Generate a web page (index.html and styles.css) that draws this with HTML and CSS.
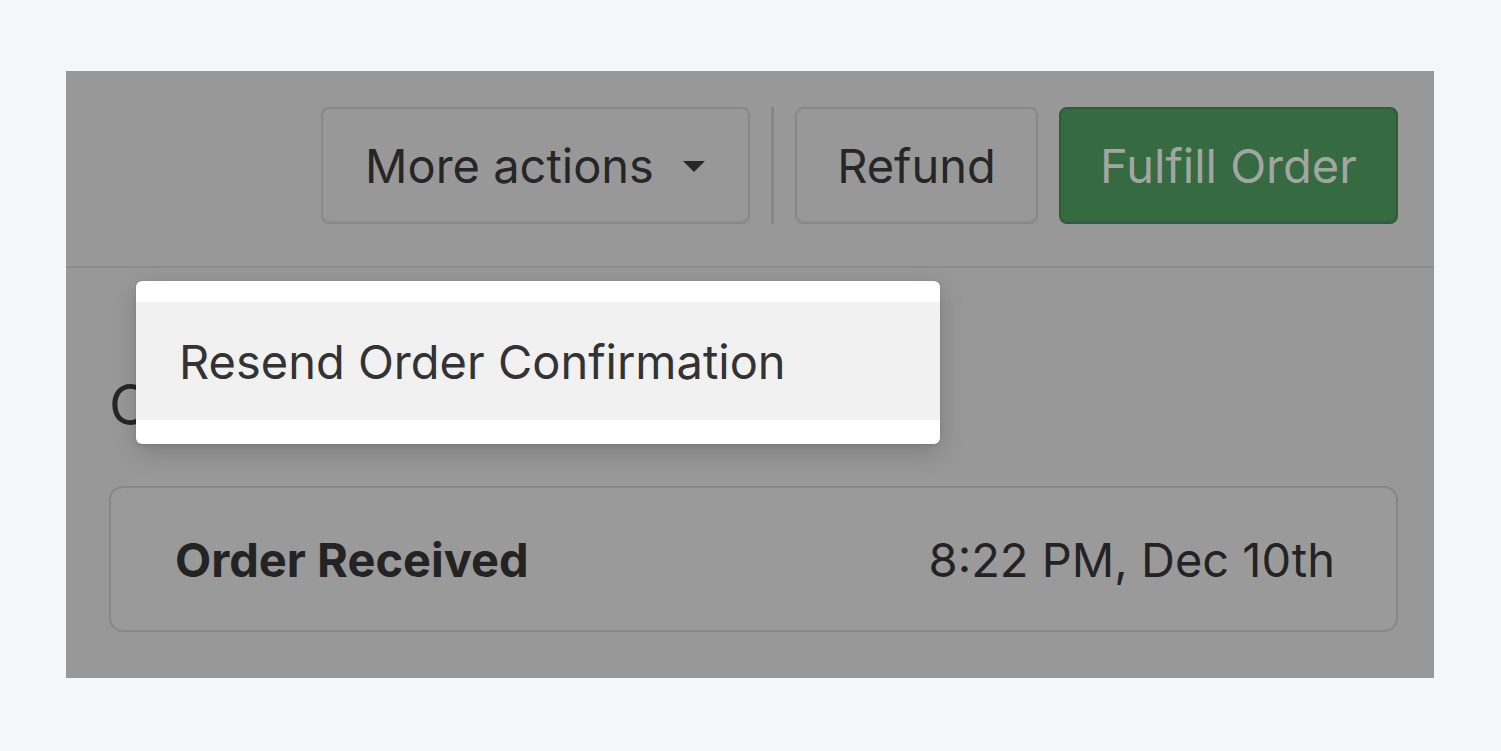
FILE: index.html
```html
<!DOCTYPE html>
<html>
<head>
<meta charset="utf-8">
<link rel="stylesheet" href="styles.css">
</head>
<body>
<div class="panel">
  <div class="toolbar">
    <button class="btn btn-more">More actions <span class="caret"></span></button>
    <span class="sep"></span>
    <button class="btn btn-refund">Refund</button>
    <button class="btn btn-primary">Fulfill Order</button>
  </div>
  <div class="content">
    <div class="menu">
      <div class="menu-item">Resend Order Confirmation</div>
    </div>
    <h2 class="heading">Customer Timeline</h2>
    <div class="card">
      <span class="event">Order Received</span>
      <span class="time">8:22 PM, Dec 10th</span>
    </div>
  </div>
</div>
</body>
</html>
```
FILE: styles.css
```css
* { box-sizing: border-box; }
html, body { margin: 0; padding: 0; }
body {
  background: #f5f6f8;
  font-family: Inter, "Noto Sans", sans-serif;
  width: 1501px;
  height: 751px;
  padding: 71px 67px 73px 66px;
}
.panel {
  width: 1368px;
  height: 607px;
  background: #989898;
  position: relative;
}
.toolbar {
  display: flex;
  justify-content: flex-end;
  align-items: center;
  gap: 21px;
  padding: 36px 36px 42px 0;
  border-bottom: 2px solid #8c8c8c;
}
.btn {
  height: 117px;
  border: 2px solid #888;
  border-radius: 8px;
  background: #989898;
  color: #262626;
  font-family: inherit;
  font-size: 47px;
  padding: 0;
  display: flex;
  align-items: center;
  justify-content: center;
  box-shadow: inset 0 -2px 0 rgba(0,0,0,0.03);
  white-space: nowrap;
}
.btn-more { width: 429px; justify-content: flex-start; padding-left: 42px; }
.btn-refund { width: 243px; }
.caret {
  display: inline-block;
  width: 0; height: 0;
  border-left: 11px solid transparent;
  border-right: 11px solid transparent;
  border-top: 11px solid #262626;
  margin-left: 29px;
  margin-top: 2px;
}
.sep {
  width: 3px;
  height: 117px;
  background: #868686;
}
.btn-primary {
  background: #366a41;
  border-color: #2f5d39;
  color: #a2a6a3;
  width: 339px;
}
.content {
  position: relative;
  padding: 0 36px 0 43px;
}
.heading {
  margin: 0;
  padding-top: 103px;
  height: 218px;
  font-size: 56px;
  font-weight: 400;
  color: #262626;
  line-height: 68px;
}
.menu {
  position: absolute;
  left: 70px;
  top: 13px;
  width: 804px;
  height: 163px;
  background: #fff;
  border-radius: 6px;
  padding: 21px 0 24px;
  box-shadow: 0 8px 24px rgba(0,0,0,0.18), 0 1px 3px rgba(0,0,0,0.1);
  z-index: 2;
}
.menu-item {
  background: #f1f1f1;
  height: 118px;
  display: flex;
  align-items: center;
  padding-left: 43px;
  font-size: 47px;
  color: #333;
}
.card {
  height: 146px;
  border: 2px solid #878787;
  border-radius: 14px;
  background: #9a9a9a;
  display: flex;
  justify-content: space-between;
  align-items: center;
  padding: 0 61px 0 64px;
  font-size: 47px;
  color: #232323;
}
.event { font-weight: 700; }
```
